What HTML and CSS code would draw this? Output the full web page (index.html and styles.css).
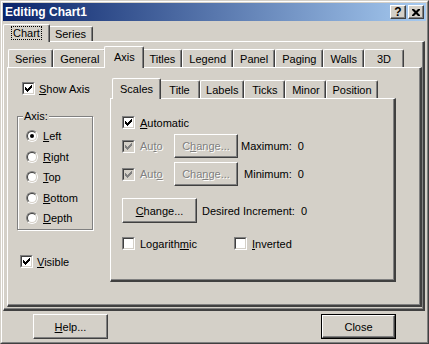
FILE: index.html
```html
<!DOCTYPE html>
<html>
<head>
<meta charset="utf-8">
<title>Editing Chart1</title>
<link rel="stylesheet" href="styles.css">
</head>
<body>
<div class="window">
  <div class="frame">
    <div class="titlebar">
      <span class="title">Editing Chart1</span>
      <span class="tb-btns">
        <span class="tb-btn tb-help">?</span>
        <span class="tb-btn tb-close"><svg width="8" height="7" viewBox="0 0 8 7"><path d="M0 0h2l2 2 2-2h2v1l-2.5 2.5L8 6v1H6L4 5 2 7H0V6l2.5-2.5L0 1z" fill="#000"/></svg></span>
      </span>
    </div>

    <div class="tabrow outer-tabs">
      <div class="tab sel"><span class="focus">Chart</span></div>
      <div class="tab">Series</div>
    </div>

    <div class="page outer-page">
      <div class="tabrow inner-tabs">
        <div class="tab">Series</div>
        <div class="tab">General</div>
        <div class="tab sel">Axis</div>
        <div class="tab">Titles</div>
        <div class="tab">Legend</div>
        <div class="tab">Panel</div>
        <div class="tab">Paging</div>
        <div class="tab">Walls</div>
        <div class="tab">3D</div>
      </div>

      <div class="page inner-page">
        <div class="left-col">
          <div class="cb-row show-axis">
            <span class="check"><span class="check-in"><svg width="9" height="9" viewBox="0 0 9 9"><path d="M1 3h1v1h1v1h1v-1h1v-1h1v-1h1v-1h1v3h-1v1h-1v1h-1v1h-1v1h-1v-1h-1v-1h-1v-3z" fill="#000"/></svg></span></span>
            <span class="lbl"><u>S</u>how Axis</span>
          </div>

          <div class="group">
            <div class="legend">Axis:</div>
            <div class="radios">
              <div class="radio-row"><span class="radio"><span class="radio-in"><span class="dot"></span></span></span><span class="lbl"><u>L</u>eft</span></div>
              <div class="radio-row"><span class="radio"><span class="radio-in"></span></span><span class="lbl"><u>R</u>ight</span></div>
              <div class="radio-row"><span class="radio"><span class="radio-in"></span></span><span class="lbl"><u>T</u>op</span></div>
              <div class="radio-row"><span class="radio"><span class="radio-in"></span></span><span class="lbl"><u>B</u>ottom</span></div>
              <div class="radio-row"><span class="radio"><span class="radio-in"></span></span><span class="lbl"><u>D</u>epth</span></div>
            </div>
          </div>

          <div class="cb-row visible">
            <span class="check"><span class="check-in"><svg width="9" height="9" viewBox="0 0 9 9"><path d="M1 3h1v1h1v1h1v-1h1v-1h1v-1h1v-1h1v3h-1v1h-1v1h-1v1h-1v1h-1v-1h-1v-1h-1v-3z" fill="#000"/></svg></span></span>
            <span class="lbl"><u>V</u>isible</span>
          </div>
        </div>

        <div class="right-col">
          <div class="tabrow sub-tabs">
            <div class="tab sel">Scales</div>
            <div class="tab">Title</div>
            <div class="tab">Labels</div>
            <div class="tab">Ticks</div>
            <div class="tab">Minor</div>
            <div class="tab">Position</div>
          </div>

          <div class="page sub-page">
            <div class="row row-automatic">
              <span class="check"><span class="check-in"><svg width="9" height="9" viewBox="0 0 9 9"><path d="M1 3h1v1h1v1h1v-1h1v-1h1v-1h1v-1h1v3h-1v1h-1v1h-1v1h-1v1h-1v-1h-1v-1h-1v-3z" fill="#000"/></svg></span></span>
              <span class="lbl"><u>A</u>utomatic</span>
            </div>

            <div class="row row-limit row-max">
              <span class="auto-cell">
                <span class="check disabled"><span class="check-in"><svg width="9" height="9" viewBox="0 0 9 9"><path d="M1 3h1v1h1v1h1v-1h1v-1h1v-1h1v-1h1v3h-1v1h-1v1h-1v1h-1v1h-1v-1h-1v-1h-1v-3z" fill="#808080"/></svg></span></span>
                <span class="lbl dis">Au<u>t</u>o</span>
              </span>
              <span class="btn btn-small dis">C<u>h</u>ange...</span>
              <span class="limit-lbl">Maximum:&nbsp; 0</span>
            </div>

            <div class="row row-limit row-min">
              <span class="auto-cell">
                <span class="check disabled"><span class="check-in"><svg width="9" height="9" viewBox="0 0 9 9"><path d="M1 3h1v1h1v1h1v-1h1v-1h1v-1h1v-1h1v3h-1v1h-1v1h-1v1h-1v1h-1v-1h-1v-1h-1v-3z" fill="#808080"/></svg></span></span>
                <span class="lbl dis">Aut<u>o</u></span>
              </span>
              <span class="btn btn-small dis">Cha<u>n</u>ge...</span>
              <span class="limit-lbl">Minimum:&nbsp; 0</span>
            </div>

            <div class="row row-incr">
              <span class="btn btn-change"><u>C</u>hange...</span>
              <span class="incr-lbl">Desired Increment:&nbsp; 0</span>
            </div>

            <div class="row row-opts">
              <span class="opt">
                <span class="check"><span class="check-in"></span></span>
                <span class="lbl">Logarith<u>m</u>ic</span>
              </span>
              <span class="opt">
                <span class="check"><span class="check-in"></span></span>
                <span class="lbl"><u>I</u>nverted</span>
              </span>
            </div>
          </div>
        </div>
      </div>
    </div>

    <div class="footer">
      <span class="btn btn-foot"><u>H</u>elp...</span>
      <span class="btn btn-foot default"><span class="btn-inner">Close</span></span>
    </div>
  </div>
</div>
</body>
</html>
```

FILE: styles.css
```css
* { box-sizing: border-box; }
html, body { margin: 0; padding: 0; }
body {
  width: 429px;
  height: 344px;
  overflow: hidden;
  background: #d4d0c8;
  font: 11px "Liberation Sans", Arial, sans-serif;
  color: #000;
}
u { text-decoration: underline; text-underline-offset: 1px; }

.window {
  width: 429px;
  height: 344px;
  background: #d4d0c8;
  border: 1px solid;
  border-color: #d4d0c8 #404040 #404040 #d4d0c8;
  display: flex;
}
.frame {
  flex: 1;
  border: 1px solid;
  border-color: #fff #808080 #808080 #fff;
  padding: 1px;
  display: flex;
  flex-direction: column;
}

/* Title bar */
.titlebar {
  height: 18px;
  flex: none;
  display: flex;
  align-items: center;
  justify-content: space-between;
  padding: 0 2px 0 2px;
  background: linear-gradient(to right, #0a246a, #a6caf0);
}
.title {
  color: #fff;
  font-weight: bold;
  font-size: 12px;
}
.tb-btns { display: flex; gap: 2px; }
.tb-btn {
  width: 16px;
  height: 14px;
  display: flex;
  align-items: center;
  justify-content: center;
  background: #d4d0c8;
  border: 1px solid;
  border-color: #fff #404040 #404040 #fff;
  box-shadow: inset -1px -1px 0 #808080;
}
.tb-help { font-weight: bold; font-size: 12px; line-height: 1; padding-bottom: 1px; }

/* Tabs */
.tabrow {
  display: flex;
  align-items: flex-end;
  flex: none;
}
.tab {
  height: 18px;
  min-width: 40px;
  padding: 0 6px;
  display: flex;
  align-items: center;
  justify-content: center;
  white-space: nowrap;
  background: #d4d0c8;
  border-top: 1px solid #fff;
  border-left: 1px solid #fff;
  border-right: 1px solid #404040;
  box-shadow: inset -1px 0 0 #808080;
  border-radius: 2px 2px 0 0;
}
.tab.sel {
  position: relative;
  z-index: 1;
  margin: 0 -2px -1px -2px;
  padding: 0 8px 1px;
}

.outer-tabs { height: 20px; padding-left: 2px; }
.outer-tabs .tab { height: 15px; }
.outer-tabs .tab.sel { height: 18px; min-width: 43px; }
.focus { outline: 1px dotted #000; outline-offset: 0; padding: 0 1px; line-height: 12px; }

.inner-tabs { height: 25px; padding-left: 1px; }
.inner-tabs .tab.sel { height: 22px; }

.sub-tabs { height: 30px; padding-left: 4px; }
.sub-tabs .tab { padding: 0 5px; min-width: 41px; }
.sub-tabs .tab.sel { height: 21px; padding: 0 7px 1px; }

/* Pages */
.page {
  background: #d4d0c8;
  border-top: 1px solid #fff;
  border-left: 1px solid #fff;
  border-right: 2px solid #404040;
  border-bottom: 2px solid #404040;
  box-shadow: inset -1px -1px 0 #808080;
}
.outer-page {
  flex: 1;
  width: 422px;
  display: flex;
  flex-direction: column;
  padding: 0 1px 2px 3px;
}
.inner-page {
  flex: 1;
  width: 415px;
  display: flex;
}

/* Left column */
.left-col {
  width: 102px;
  flex: none;
  display: flex;
  flex-direction: column;
  align-items: flex-start;
}
.cb-row { display: flex; align-items: center; height: 13px; }
.show-axis { margin: 14px 0 0 14px; }
.visible { margin: 25px 0 0 12px; }
.lbl { margin-left: 4px; white-space: nowrap; }

.group {
  margin: 21px 0 0 9px;
  width: 76px;
  height: 114px;
  border: 1px solid #808080;
  box-shadow: 1px 1px 0 #fff, inset 1px 1px 0 #fff;
}
.legend {
  width: fit-content;
  margin: -7px 0 0 5px;
  padding: 0 1px;
  line-height: 13px;
  background: #d4d0c8;
}
.radios { padding: 3px 0 0 8px; }
.radio-row { height: 20.5px; display: flex; align-items: center; }
.radio-row .lbl { margin-left: 5px; }

.radio {
  width: 12px;
  height: 12px;
  border-radius: 50%;
  border: 1px solid;
  border-color: #808080 #fff #fff #808080;
  display: flex;
  flex: none;
}
.radio-in {
  flex: 1;
  border-radius: 50%;
  border: 1px solid;
  border-color: #404040 #d4d0c8 #d4d0c8 #404040;
  background: #fff;
  display: flex;
  align-items: center;
  justify-content: center;
}
.dot { width: 4px; height: 4px; border-radius: 50%; background: #000; }

/* Checkbox */
.check {
  width: 13px;
  height: 13px;
  flex: none;
  display: flex;
  border: 1px solid;
  border-color: #808080 #fff #fff #808080;
}
.check-in {
  flex: 1;
  display: flex;
  align-items: center;
  justify-content: center;
  border: 1px solid;
  border-color: #404040 #d4d0c8 #d4d0c8 #404040;
  background: #fff;
}
.check.disabled .check-in { background: #d4d0c8; }

/* Right column */
.right-col {
  width: 286px;
  flex: none;
  display: flex;
  flex-direction: column;
}
.sub-page {
  width: 286px;
  height: 184px;
  padding: 0 0 0 11px;
  display: flex;
  flex-direction: column;
}
.row { display: flex; align-items: center; flex: none; }
.row .lbl { margin-left: 5px; }
.row-automatic { height: 13px; margin-top: 17px; }
.row-limit { height: 24px; }
.row-max { margin-top: 5px; }
.row-min { margin-top: 4px; }
.auto-cell { width: 52px; display: flex; align-items: center; }
.dis { color: #808080; text-shadow: 1px 1px 0 #fff; }
.limit-lbl { width: 64px; margin-left: 2px; text-align: right; white-space: nowrap; }
.row-incr { height: 25px; margin-top: 12px; }
.incr-lbl { margin-left: 5px; white-space: nowrap; }
.row-opts { height: 13px; margin-top: 14px; }
.opt { display: flex; align-items: center; width: 112px; }

/* Buttons */
.btn {
  display: flex;
  align-items: center;
  justify-content: center;
  white-space: nowrap;
  background: #d4d0c8;
  border: 1px solid;
  border-color: #fff #404040 #404040 #fff;
  box-shadow: inset -1px -1px 0 #808080, inset 1px 1px 0 #d4d0c8;
}
.btn-small { width: 64px; height: 24px; }
.btn-change { width: 75px; height: 25px; }

.footer {
  height: 30px;
  flex: none;
  display: flex;
  justify-content: space-between;
  align-items: flex-start;
  padding: 3px 30px 0 30px;
}
.btn-foot { width: 75px; height: 25px; }
.btn-foot.default {
  border: 1px solid #000;
  box-shadow: none;
  padding: 0;
  align-items: stretch;
}
.btn-inner {
  flex: 1;
  display: flex;
  align-items: center;
  justify-content: center;
  border: 1px solid;
  border-color: #fff #404040 #404040 #fff;
  box-shadow: inset -1px -1px 0 #808080;
}
```
